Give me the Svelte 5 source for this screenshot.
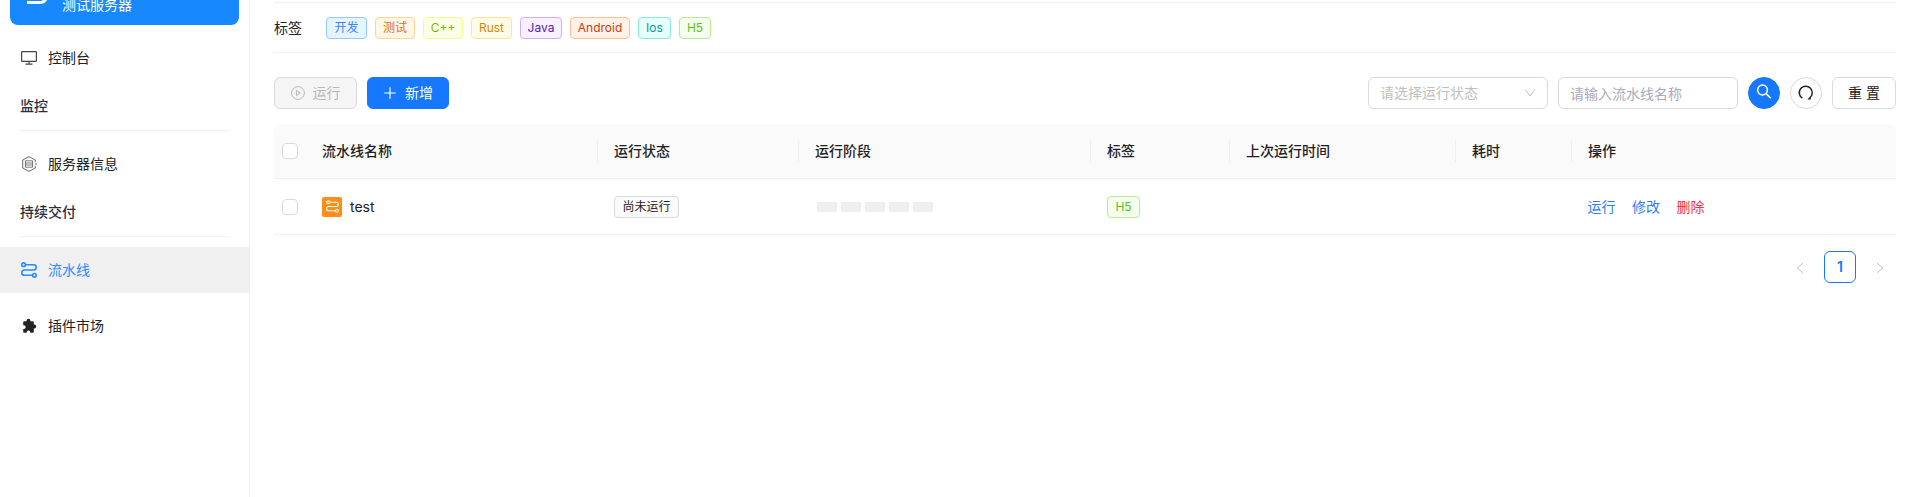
<script>
  const tags = [
    { name: '开发', color: 'blue', width: 41 },
    { name: '测试', color: 'orange', width: 40 },
    { name: 'C++', color: 'lime', width: 40 },
    { name: 'Rust', color: 'gold', width: 41 },
    { name: 'Java', color: 'purple', width: 42 },
    { name: 'Android', color: 'volcano', width: 60 },
    { name: 'Ios', color: 'cyan', width: 33 },
    { name: 'H5', color: 'green', width: 32 }
  ];
  const columns = ['流水线名称', '运行状态', '运行阶段', '标签', '上次运行时间', '耗时', '操作'];
  const stages = [1, 2, 3, 4, 5];
</script>

{#snippet flow(size, stroke)}
  <svg width={size} height={size} viewBox="0 0 16 16" fill="none" stroke="currentColor" stroke-width={stroke}>
    <circle cx="2.6" cy="2.7" r="1.8" />
    <circle cx="13.4" cy="13.3" r="1.8" />
    <path d="M4.4 2.7H12.6Q15.2 2.7 15.2 5.3Q15.2 8 12.6 8H3.4Q.8 8 .8 10.7Q.8 13.3 3.4 13.3H11.6" />
  </svg>
{/snippet}

<div class="page">
  <aside>
    <div class="server">
      <svg width="24" height="24" viewBox="0 0 24 24" fill="none" stroke="#fff" stroke-width="3"><path d="M2 20.5H15Q20 20.5 21.5 15.5" /></svg>
      <span>测试服务器</span>
    </div>
    <a class="item first" href="#top">
      <svg width="16" height="16" viewBox="0 0 16 16" fill="none" stroke="#444" stroke-width="1.2"><rect x=".6" y="1.6" width="14.8" height="9.8" rx=".6" /><path d="M8 11.6V14M4.5 14.2H11.5" /></svg>
      控制台
    </a>
    <h3>监控</h3>
    <a class="item" href="#top">
      <svg width="16" height="16" viewBox="0 0 16 16" fill="none" stroke="#444" stroke-width=".8"><path d="M8 .6L14.3 4V6.2M14.3 9.8V12L8 15.4L1.7 12V4L8 .6M15 7V9" /><path d="M4.4 4.8H11.6V11.2H4.4ZM4.4 7H11.6M4.4 9H11.6" stroke-width=".7" /></svg>
      服务器信息
    </a>
    <h3>持续交付</h3>
    <a class="item active" href="#top">{@render flow(16, 1.6)}流水线</a>
    <a class="item plug" href="#top">
      <svg width="16" height="16" viewBox="0 0 16 16"><path fill="#222" d="M2.2 4.2Q2.2 3.2 3.2 3.2H5.6V2.6A1.9 1.9 0 0 1 9.4 2.6V3.2H11.8Q12.8 3.2 12.8 4.2V6.6H13.3A1.9 1.9 0 0 1 13.3 10.4H12.8V13.8Q12.8 14.8 11.8 14.8H9.3V14.2A1.8 1.8 0 0 0 5.7 14.2V14.8H3.2Q2.2 14.8 2.2 13.8V11H2.8A1.8 1.8 0 0 0 2.8 7.2H2.2Z" /></svg>
      插件市场
    </a>
  </aside>

  <main>
    <section class="tagbar">
      <span class="label">标签</span>
      {#each tags as t}<span class="tag {t.color}" style="width: {t.width}px">{t.name}</span>{/each}
    </section>

    <section class="toolbar">
      <button class="btn disabled" disabled>
        <svg width="14" height="14" viewBox="0 0 14 14" fill="none" stroke="currentColor"><circle cx="7" cy="7" r="6.4" /><path d="M5.4 4.3L9.3 7L5.4 9.7Z" /></svg>
        运行
      </button>
      <button class="btn primary">
        <svg width="14" height="14" viewBox="0 0 14 14" stroke="currentColor" stroke-width="1.2"><path d="M7 1.2V12.8M1.2 7H12.8" /></svg>
        新增
      </button>
      <div class="filters">
        <div class="field select">
          <span>请选择运行状态</span>
          <svg width="12" height="12" viewBox="0 0 12 12" fill="none" stroke="currentColor"><path d="M1.2 2.4L6 9L10.8 2.4" /></svg>
        </div>
        <div class="field input"><span>请输入流水线名称</span></div>
        <button class="round solid" aria-label="搜索">
          <svg width="16" height="16" viewBox="0 0 16 16" fill="none" stroke="currentColor" stroke-width="1.5"><circle cx="6.5" cy="6" r="4.9" /><path d="M10.1 9.6L14.8 14.3" /></svg>
        </button>
        <button class="round" aria-label="刷新">
          <svg width="16" height="16" viewBox="0 0 16 16" fill="none" stroke="currentColor" stroke-width="1.5"><path d="M4.4 13.2A6.5 6.5 0 1 1 11.6 12.9" /><path d="M9.4 14.5L12.8 14.6L12.5 11.2Z" fill="currentColor" stroke="none" /></svg>
        </button>
        <button class="btn reset">重 置</button>
      </div>
    </section>

    <div class="table">
      <div class="row head">
        <div class="check"><i></i></div>
        {#each columns as c}<div class="cell">{c}</div>{/each}
      </div>
      <div class="row">
        <div class="check"><i></i></div>
        <div class="cell name"><span class="logo">{@render flow(13, 1.3)}</span>test</div>
        <div class="cell"><span class="tag idle">尚未运行</span></div>
        <div class="cell stages">{#each stages as s (s)}<i></i>{/each}</div>
        <div class="cell"><span class="tag green">H5</span></div>
        <div class="cell"></div>
        <div class="cell"></div>
        <div class="cell actions"><a href="#top">运行</a><a href="#top">修改</a><a href="#top" class="danger">删除</a></div>
      </div>
    </div>

    <nav>
      <span class="arrow"><svg width="12" height="12" viewBox="0 0 12 12" fill="none" stroke="currentColor"><path d="M9 1.2L3 6L9 10.8" /></svg></span>
      <span class="current">1</span>
      <span class="arrow"><svg width="12" height="12" viewBox="0 0 12 12" fill="none" stroke="currentColor"><path d="M3 1.2L9 6L3 10.8" /></svg></span>
    </nav>
  </main>
</div>

<style>
  :global(body) { background: #fff; }
  .page { display: flex; height: 497px; overflow: hidden; font: 14px/22px Inter, "Noto Sans CJK SC", sans-serif; color: #222; }
  .page * { box-sizing: border-box; }
  svg { display: block; flex: none; }
  a { text-decoration: none; color: inherit; }
  aside { width: 250px; flex: none; border-right: 1px solid #f0f0f0; }
  .server { display: flex; align-items: flex-end; gap: 13px; height: 45px; margin: -20px 10px 0; padding: 0 15px 9px; border-radius: 0 0 8px 8px; background: #1888ff; color: #fff; }
  .server svg { margin-bottom: 10px; }
  .item { display: flex; align-items: center; gap: 11px; height: 46px; padding-left: 21px; }
  .item.first { margin-top: 10px; }
  .item.plug { margin-top: 10px; }
  .active { background: #f0f0f0; color: #2a8bfc; }
  h3 { height: 36px; margin: 14px 20px 10px; border-bottom: 1px solid #f0f0f0; font-size: 14px; line-height: 22px; font-weight: 500; color: #2c2c3a; }
  main { flex: 1; min-width: 0; padding: 2px 20px 0 24px; }
  .tagbar { display: flex; align-items: center; gap: 8px; height: 51px; border: solid #f2f2f6; border-width: 1px 0; }
  .label { width: 44px; }
  .tag { display: flex; justify-content: center; flex: none; height: 22px; padding: 0 7px; border: 1px solid #d9d9d9; border-radius: 4px; background: #fafafa; font-size: 12px; line-height: 20px; white-space: nowrap; }
  .idle { width: 65px; }
  .blue { color: #3b82f6; background: #e6f4ff; border-color: #91caff; }
  .orange { color: #d9722b; background: #fff7e6; border-color: #ffd591; }
  .lime { color: #7cb305; background: #fcffe6; border-color: #eaff8f; }
  .gold { color: #d48806; background: #fffbe6; border-color: #ffe58f; }
  .purple { color: #531dab; background: #f9f0ff; border-color: #d3adf7; }
  .volcano { color: #d4380d; background: #fff2e8; border-color: #ffbb96; }
  .cyan { color: #08979c; background: #e6fffb; border-color: #87e8de; }
  .green { width: 33px; color: #52c41a; background: #f6ffed; border-color: #b7eb8f; }
  .toolbar { display: flex; gap: 10px; height: 32px; margin: 24px 0 15px; }
  button { font: inherit; color: inherit; }
  .btn { display: flex; align-items: center; justify-content: center; gap: 8px; height: 32px; width: 83px; padding: 0; border: 1px solid #d9d9d9; border-radius: 6px; background: #fff; }
  .disabled { background: #f5f5f5; color: #b8b8b8; }
  .primary { width: 82px; background: #1677ff; border-color: #1677ff; color: #fff; }
  .filters { display: flex; gap: 10px; margin-left: auto; }
  .field { display: flex; align-items: center; justify-content: space-between; width: 180px; height: 32px; padding: 0 11px; border: 1px solid #d9d9d9; border-radius: 6px; color: #bfbfbf; }
  .input { padding-top: 1px; color: #a9aabb; }
  .round { display: flex; align-items: center; justify-content: center; width: 32px; height: 32px; padding: 0; border: 1px solid #d9d9d9; border-radius: 50%; background: #fff; }
  .solid { background: #1677ff; border-color: #1677ff; color: #fff; padding-bottom: 2px; }
  .reset { width: 64px; }
  .row { display: grid; grid-template-columns: 32px 292px 201px 292px 139px 226px 116px 1fr; align-items: center; height: 56px; border-bottom: 1px solid #f0f0f0; }
  .head { height: 55px; background: #fafafa; border-radius: 8px 8px 0 0; font-weight: 500; color: #1f1f1f; }
  .check { padding-left: 8px; }
  .check i { display: block; width: 16px; height: 16px; border: 1px solid #d9d9d9; border-radius: 4px; background: #fff; }
  .cell { display: flex; align-items: center; height: 22px; padding-left: 16px; }
  .head .cell { border-right: 1px solid #f0f0f0; }
  .head .cell:last-child { border-right: 0; }
  .name { gap: 8px; }
  .logo { display: flex; align-items: center; justify-content: center; width: 20px; height: 20px; border-radius: 2px; background: #ff8d1a; color: #fff; }
  .stages { gap: 4px; padding-left: 18px; }
  .stages i { width: 20px; height: 10px; background: #efefef; }
  .cell.actions { gap: 16.5px; padding-left: 15.5px; color: #2f7df6; }
  .danger { color: #f5333f; }
  nav { display: flex; justify-content: flex-end; gap: 8px; margin-top: 16px; }
  .arrow, .current { display: flex; align-items: center; justify-content: center; width: 32px; height: 32px; color: #bfbfbf; }
  .arrow { padding-top: 2px; }
  .current { border: 1px solid #1677ff; border-radius: 6px; color: #1677ff; font-weight: 600; }
</style>
